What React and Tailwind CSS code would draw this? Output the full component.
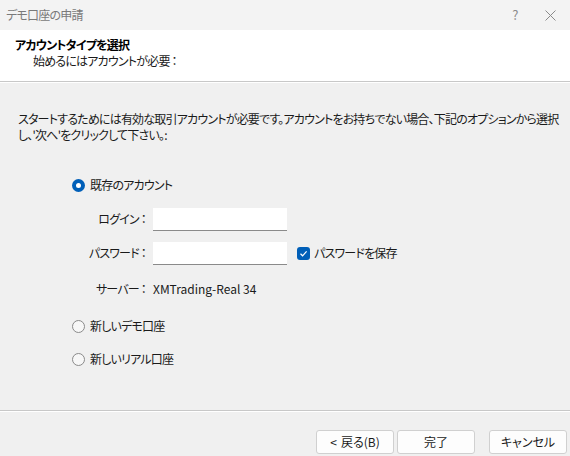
import React, { useState } from 'react'

const font = { fontFamily: '"Noto Sans CJK JP", "Noto Sans", sans-serif' }

function Radio({ checked, label, onClick }){
  return (
    <button onClick={onClick} className="flex items-center gap-[5px] text-[12px] leading-[18px] text-[#1a1a1a]">
      {checked ? (
        <span className="w-[13px] h-[13px] rounded-full bg-[#005fb8] flex items-center justify-center">
          <span className="w-[5px] h-[5px] rounded-full bg-white"></span>
        </span>
      ) : (
        <span className="w-[13px] h-[13px] rounded-full border border-[#8a8a8a] bg-[#f7f7f7]"></span>
      )}
      <span>{label}</span>
    </button>
  )
}

function Field({ label, children }){
  return (
    <div className="flex items-center h-[24px]">
      <div className="w-[81px] text-right pr-[7px] text-[12px] text-[#1a1a1a]">{label}</div>
      {children}
    </div>
  )
}

export default function App(){
  const [mode, setMode] = useState('existing')
  const [login, setLogin] = useState('')
  const [pass, setPass] = useState('')
  const [save, setSave] = useState(true)

  return (
    <div className="w-[570px] h-[456px] bg-[#f0f0f0] flex flex-col [font-feature-settings:'palt'] tracking-[-0.8px]" style={font}>
      {/* title bar */}
      <div className="h-[30px] bg-[#f3f3f3] flex items-center justify-between pl-[6px]">
        <span className="text-[12px] text-[#7a7a7a]">デモ口座の申請</span>
        <div className="flex items-center text-[#8a8a8a]">
          <span className="w-[30px] text-center text-[13px]">?</span>
          <span className="w-[40px] flex justify-center">
            <svg width="11" height="11" viewBox="0 0 11 11"><path d="M0.5 0.5 L10.5 10.5 M10.5 0.5 L0.5 10.5" stroke="#8a8a8a" strokeWidth="1"/></svg>
          </span>
        </div>
      </div>

      {/* header */}
      <div className="h-[52px] bg-white border-b border-[#c8c8c8] pl-[15px] pt-[7px]">
        <div className="text-[12px] font-bold text-[#000] leading-[16px]">アカウントタイプを選択</div>
        <div className="text-[12px] text-[#1a1a1a] leading-[16px] pl-[18px]">始めるにはアカウントが必要 ：</div>
      </div>

      {/* body */}
      <div className="flex-1 border-t border-white">
        <p className="text-[12px] text-[#1a1a1a] leading-[16px] pl-[18px] pr-[10px] pt-[28px]">
          スタートするためには有効な取引アカウントが必要です。アカウントをお持ちでない場合、下記のオプションから選択し、'次へ'をクリックして下さい。:
        </p>

        <div className="pl-[72px] pt-[33px]">
          <Radio checked={mode==='existing'} label="既存のアカウント" onClick={()=>setMode('existing')} />

          <div className="mt-[13px] flex flex-col gap-[10px]">
            <Field label="ログイン ：">
              <input value={login} onChange={e=>setLogin(e.target.value)} className="w-[134px] h-[23px] bg-white border-b border-[#8a8a8a] outline-none text-[12px] px-[4px]" />
            </Field>
            <Field label="パスワード ：">
              <input type="password" value={pass} onChange={e=>setPass(e.target.value)} className="w-[134px] h-[23px] bg-white border-b border-[#8a8a8a] outline-none text-[12px] px-[4px]" />
              <button onClick={()=>setSave(!save)} className="ml-[10px] flex items-center gap-[4px] text-[12px] text-[#1a1a1a]">
                <span className={save ? 'w-[13px] h-[13px] rounded-[3px] bg-[#005fb8] flex items-center justify-center' : 'w-[13px] h-[13px] rounded-[3px] border border-[#8a8a8a] bg-white'}>
                  {save && <svg width="9" height="9" viewBox="0 0 9 9"><path d="M1.5 4.8 L3.6 6.8 L7.6 2.3" fill="none" stroke="white" strokeWidth="1.2"/></svg>}
                </span>
                パスワードを保存
              </button>
            </Field>
            <div className="mt-[2px]">
              <Field label="サーバー ：">
                <span className="text-[12px] text-[#1a1a1a] tracking-normal">XMTrading-Real 34</span>
              </Field>
            </div>
          </div>

          <div className="mt-[16px] flex flex-col gap-[15px]">
            <Radio checked={mode==='demo'} label="新しいデモ口座" onClick={()=>setMode('demo')} />
            <Radio checked={mode==='real'} label="新しいリアル口座" onClick={()=>setMode('real')} />
          </div>
        </div>
      </div>

      {/* footer */}
      <div className="h-[46px] border-t border-[#c8c8c8]">
        <div className="border-t border-white h-full flex items-start justify-end pt-[18px] pr-[3px] gap-[3px] tracking-normal">
          <button className="w-[78px] h-[24px] bg-[#fdfdfd] border border-[#d0d0d0] rounded-[3px] text-[12px] text-[#1a1a1a]"><span className="mr-[4px]">&lt;</span>戻る(B)</button>
          <button className="w-[78px] h-[24px] bg-[#fdfdfd] border border-[#d0d0d0] rounded-[3px] text-[12px] text-[#1a1a1a] mr-[11px]">完了</button>
          <button className="w-[78px] h-[24px] bg-[#fdfdfd] border border-[#d0d0d0] rounded-[3px] text-[12px] text-[#1a1a1a]">キャンセル</button>
        </div>
      </div>
    </div>
  )
}
